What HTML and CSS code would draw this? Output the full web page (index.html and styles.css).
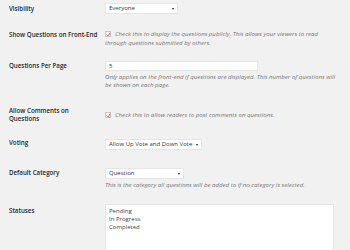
FILE: index.html
```html
<!DOCTYPE html>
<html>
<head>
<meta charset="utf-8">
<link rel="stylesheet" href="styles.css">
</head>
<body>
<div class="form">
  <div class="row r1">
    <div class="label">Visibility</div>
    <div class="field">
      <div class="select s-vis"><span>Everyone</span><span class="arrow"></span></div>
    </div>
  </div>
  <div class="row r2">
    <div class="label">Show Questions on Front-End</div>
    <div class="field">
      <p class="check-desc"><span class="checkbox"><svg viewBox="0 0 10 10" width="5" height="5"><path d="M1.5 5.2 L4 7.8 L8.6 1.6" fill="none" stroke="#d9453d" stroke-width="1.8"/></svg></span>Check this to display the questions publicly. This allows your viewers to read through questions submitted by others.</p>
    </div>
  </div>
  <div class="row r3">
    <div class="label">Questions Per Page</div>
    <div class="field">
      <div class="input">5</div>
      <p class="desc">Only applies on the front-end if questions are displayed. This number of questions will be shown on each page.</p>
    </div>
  </div>
  <div class="row r4">
    <div class="label">Allow Comments on Questions</div>
    <div class="field">
      <p class="check-desc"><span class="checkbox"><svg viewBox="0 0 10 10" width="5" height="5"><path d="M1.5 5.2 L4 7.8 L8.6 1.6" fill="none" stroke="#d9453d" stroke-width="1.8"/></svg></span>Check this to allow readers to post comments on questions.</p>
    </div>
  </div>
  <div class="row r5">
    <div class="label">Voting</div>
    <div class="field">
      <div class="select s-vote"><span>Allow Up Vote and Down Vote</span><span class="arrow"></span></div>
    </div>
  </div>
  <div class="row r6">
    <div class="label">Default Category</div>
    <div class="field">
      <div class="select s-cat"><span>Question</span><span class="arrow"></span></div>
      <p class="desc">This is the category all questions will be added to if no category is selected.</p>
    </div>
  </div>
  <div class="row r7">
    <div class="label">Statuses</div>
    <div class="field">
      <div class="textarea">Pending<br>In Progress<br>Completed</div>
    </div>
  </div>
</div>
</body>
</html>
```

FILE: styles.css
```css
html, body {
  margin: 0;
  padding: 0;
  background: #f1f1f1;
  height: 100%;
  overflow: hidden;
}
body {
  font-family: "Open Sans", "Noto Sans", sans-serif;
  color: #23282d;
}
.form {
  padding-left: 9px;
  display: flex;
  flex-direction: column;
}
.row {
  display: grid;
  grid-template-columns: 96px 1fr;
  align-items: start;
}
.label {
  font-size: 6.2px;
  font-weight: 600;
  line-height: 8px;
  padding-right: 1px;
}
.r4 .label { padding-right: 30px; }
.field {
  min-width: 0;
}
.select, .input {
  box-sizing: border-box;
  height: 11px;
  background: #fff;
  border: 1px solid #e6e6e6;
  font-size: 6px;
  line-height: 9px;
  color: #32373c;
  padding: 0 2px 0 3px;
  display: flex;
  justify-content: space-between;
  align-items: center;
}
.arrow {
  width: 0;
  height: 0;
  border-left: 1.5px solid transparent;
  border-right: 1.5px solid transparent;
  border-top: 2px solid #222;
  margin-right: 1px;
}
.s-vis { width: 73px; }
.s-vote { width: 97px; }
.s-cat { width: 79px; }
.input { width: 153px; height: 10px; }
.desc, .check-desc {
  margin: 0;
  font-size: 6.1px;
  font-style: italic;
  color: #777;
  width: 234px;
}
.desc { line-height: 8px; margin-top: 2px; }
.check-desc { line-height: 9px; }
.checkbox {
  display: inline-block;
  box-sizing: border-box;
  width: 6px;
  height: 6px;
  background: #fff;
  border: 0.5px solid #c5c5c5;
  vertical-align: -1px;
  margin-right: 4px;
  position: relative;
}
.checkbox svg {
  position: absolute;
  left: 0;
  top: 0;
}
.textarea {
  box-sizing: border-box;
  width: 229px;
  height: 47px;
  background: #fff;
  border: 1px solid #e6e6e6;
  font-size: 6px;
  line-height: 8px;
  color: #444;
  padding: 2px 3px;
}
.r1 { margin-top: 3px; }
.r1 .label { padding-top: 1.5px; }
.r2 { margin-top: 15px; }
.r2 .label { padding-top: 2px; }
.r3 { margin-top: 14px; }
.r3 .label { padding-top: 1px; }
.r4 { margin-top: 18px; }
.r4 .field { padding-top: 2.5px; }
.r5 { margin-top: 16px; }
.r5 .label { padding-top: 0; }
.r6 { margin-top: 18px; }
.r6 .label { padding-top: 1px; }
.r7 { margin-top: 15px; }
.r7 .label { padding-top: 3px; }
```
